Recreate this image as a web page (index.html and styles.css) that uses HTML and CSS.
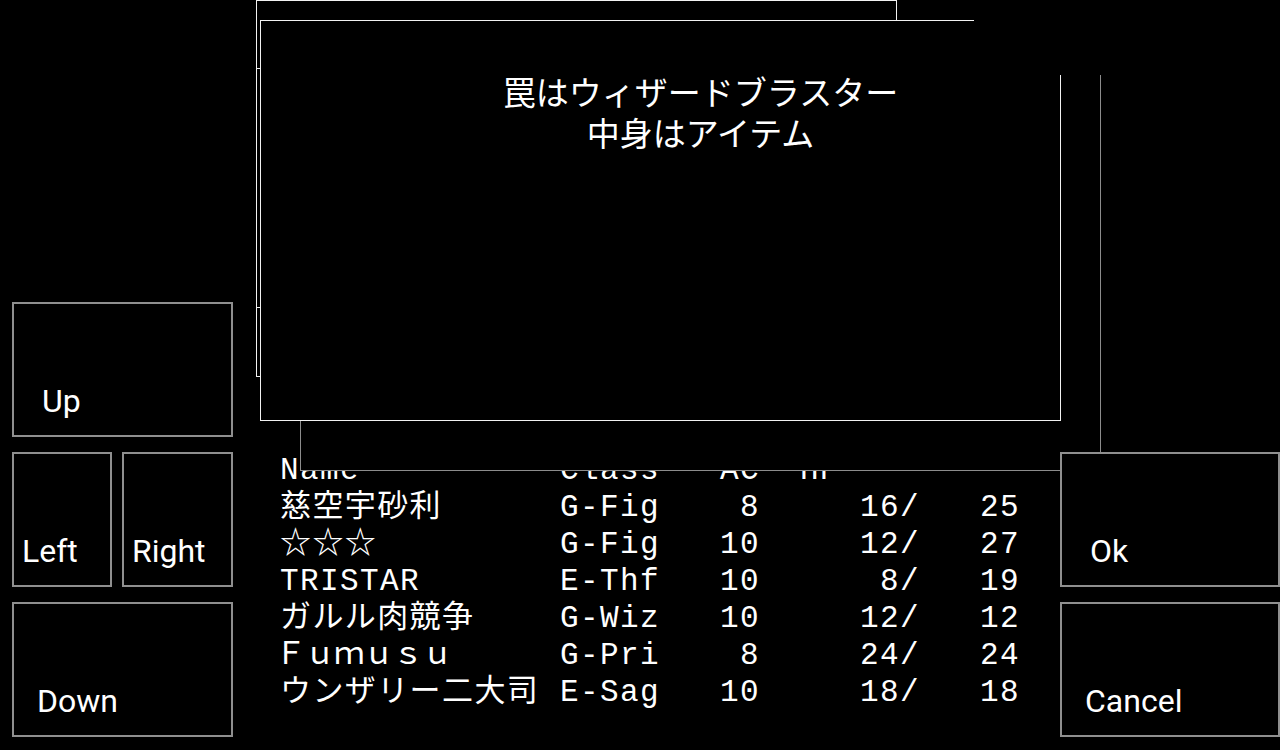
FILE: index.html
```html
<!DOCTYPE html>
<html lang="ja">
<head>
<meta charset="utf-8">
<title>Trap</title>
<link rel="stylesheet" href="styles.css">
</head>
<body>
<div class="screen">
  <div class="pad pad-left">
    <div class="btn btn-wide lbl-a">Up</div>
    <div class="btn-row">
      <div class="btn btn-small lbl-c">Left</div>
      <div class="btn btn-mid lbl-c">Right</div>
    </div>
    <div class="btn btn-wide lbl-b">Down</div>
  </div>

  <div class="party">
    <div class="row"><span class="name">Name</span><span class="stats">Class   AC  HP</span></div>
    <div class="row"><span class="name">慈空宇砂利</span><span class="stats">G-Fig    8     16/   25</span></div>
    <div class="row"><span class="name">☆☆☆</span><span class="stats">G-Fig   10     12/   27</span></div>
    <div class="row"><span class="name">TRISTAR</span><span class="stats">E-Thf   10      8/   19</span></div>
    <div class="row"><span class="name">ガルル肉競争</span><span class="stats">G-Wiz   10     12/   12</span></div>
    <div class="row"><span class="name fw">Ｆｕｍｕｓｕ</span><span class="stats">G-Pri    8     24/   24</span></div>
    <div class="row"><span class="name">ウンザリー二大司</span><span class="stats">E-Sag   10     18/   18</span></div>
  </div>

  <div class="pad pad-right">
    <div class="btn btn-side lbl-a">Ok</div>
    <div class="btn btn-side lbl-b">Cancel</div>
  </div>

  <div class="win win-back"></div>
  <div class="win win-list">
    <div class="rule rule-1"></div>
    <div class="rule rule-2"></div>
  </div>
  <div class="win win-msg">
    <p class="msg">罠はウィザードブラスター</p>
    <p class="msg">中身はアイテム</p>
  </div>
  <div class="mask"></div>
</div>
</body>
</html>
```

FILE: styles.css
```css
html, body {
  margin: 0;
  padding: 0;
  background: #000;
}

.screen {
  position: relative;
  width: 1280px;
  height: 750px;
  box-sizing: border-box;
  padding: 0 0 13px 12px;
  display: flex;
  align-items: flex-end;
  overflow: hidden;
  background: #000;
  color: #fff;
}

/* control pads */
.pad {
  display: flex;
  flex-direction: column;
  gap: 15px;
  position: relative;
}
.pad-left { width: 221px; }
.pad-right { width: 220px; z-index: 2; }

.btn-row {
  display: flex;
  gap: 10px;
}

.btn {
  box-sizing: border-box;
  height: 135px;
  border: 2px solid #8f8f8f;
  background: #000;
  color: #fff;
  font-family: Roboto, "Liberation Sans", sans-serif;
  font-size: 32px;
  line-height: 37px;
  padding-top: 79px;
}
.btn-wide { width: 221px; }
.btn-small { width: 100px; }
.btn-mid { width: 111px; }
.btn-side { width: 220px; }

.lbl-a { padding-left: 28px; }
.lbl-b { padding-left: 23px; }
.lbl-c { padding-left: 8px; }

/* party table */
.party {
  align-self: flex-start;
  margin-top: 452px;
  margin-left: 47px;
  width: 780px;
  font-family: "Liberation Mono", "Noto Sans CJK JP", monospace;
  font-size: 31px;
  letter-spacing: 1.4px;
  color: #fff;
}
.row {
  display: flex;
  height: 37px;
  line-height: 37px;
  white-space: pre;
}
.name { width: 280px; flex: none; }
.fw { letter-spacing: -1.6px; margin-left: -5px; width: 285px; }
.stats { flex: none; }

/* overlapping windows */
.win {
  position: absolute;
  box-sizing: border-box;
  background: #000;
}
.win-back {
  left: 300px;
  top: 20px;
  width: 801px;
  height: 451px;
  border: 1px solid #8c8c8c;
  z-index: 1;
}
.win-list {
  left: 256px;
  top: 0;
  width: 641px;
  height: 377px;
  border: 1px solid #f2f2f2;
  z-index: 3;
}
.rule {
  height: 0;
  border-top: 1px solid #f2f2f2;
}
.rule-1 { margin-top: 67px; }
.rule-2 { margin-top: 238px; }

.win-msg {
  left: 260px;
  top: 20px;
  width: 801px;
  height: 401px;
  border: 1px solid #f2f2f2;
  z-index: 4;
  padding: 51px 0 0 80px;
}
.msg {
  margin: 0;
  height: 41px;
  text-align: center;
  font-family: "Noto Sans CJK JP", sans-serif;
  font-size: 33px;
  line-height: 38px;
  color: #fff;
}

.mask {
  position: absolute;
  left: 974px;
  top: 0;
  right: 0;
  height: 75px;
  background: #000;
  z-index: 5;
}
```
